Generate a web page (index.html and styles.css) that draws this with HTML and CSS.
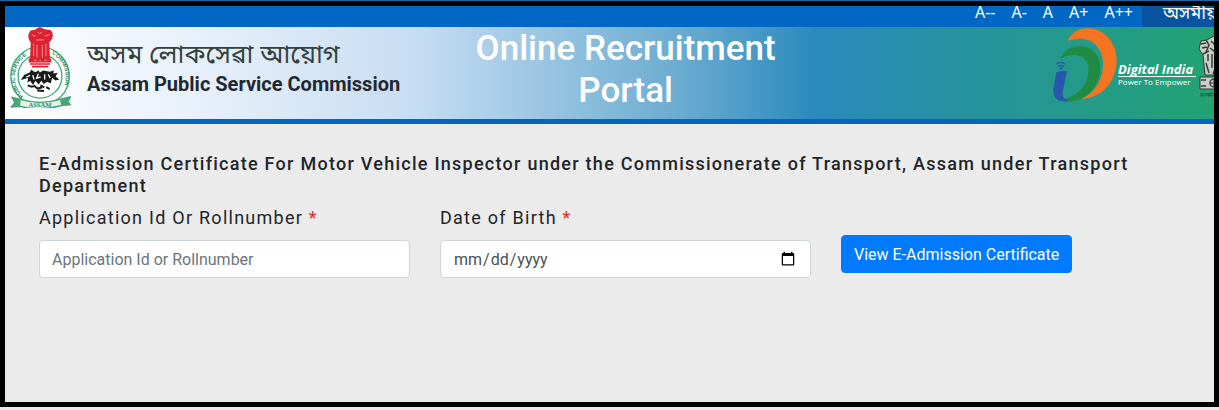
FILE: index.html
```
<!DOCTYPE html>
<html lang="en">
<head>
<meta charset="utf-8">
<meta name="viewport" content="width=device-width, initial-scale=1">
<title>Online Recruitment Portal</title>
<link rel="stylesheet" href="styles.css">
</head>
<body>
<div class="frame">
    <nav class="topbar">
        <div class="text-size">
            <a href="#">A--</a>
            <a href="#">A-</a>
            <a href="#">A</a>
            <a href="#">A+</a>
            <a href="#">A++</a>
        </div>
        <a class="language" href="#" lang="as">অসমীয়া</a>
    </nav>

    <header class="header">
        <div class="brand">
            <svg class="seal" viewBox="27 20 186 244" aria-hidden="true">
                <defs>
                    <path id="sealLeft" d="M70 228 A77 77 0 0 1 88 101"/>
                    <path id="sealRight" d="M155 101 A77 77 0 0 1 160 236"/>
                </defs>
                <circle cx="120" cy="168" r="88" fill="#fff" stroke="#3fae77" stroke-width="4"/>
                <circle cx="120" cy="168" r="66" fill="#fff" stroke="#3fae77" stroke-width="4"/>
                <text class="seal-text"><textPath href="#sealLeft">PUBLIC SERVICE</textPath></text>
                <text class="seal-text"><textPath href="#sealRight">COMMISSION</textPath></text>
                <path d="M36 232 L62 238 Q120 256 180 238 L212 230 L204 245 L211 254 L184 257 Q120 274 60 259 L34 261 L44 247Z" fill="#dff3e8" stroke="#3a9f6c" stroke-width="4"/>
                <path d="M36 232 L62 238 L60 259 L34 261 L44 247Z M180 238 L212 230 L204 245 L211 254 L184 257Z" fill="#4fa47a"/>
                <text class="seal-name" x="120" y="260" text-anchor="middle">ASSAM</text>
                <g fill="#dc2230">
                    <path d="M110 25 Q120 16 130 25 L142 28 Q157 27 158 41 Q160 53 153 61 L148 66 L150 117 L90 117 L92 67 L88 60 Q82 49 87 38 Q91 27 101 30Z"/>
                    <rect x="86" y="115" width="68" height="12"/>
                    <path d="M90 129 H150 V134 H90Z M96 137 H145 V142 H96Z"/>
                </g>
                <path d="M101 70 V108 M111 74 V112 M127 74 V112 M138 70 V108 M95 44 L107 48 M134 47 L149 43 M113 35 L119 40 L126 35 M108 59 H132" fill="none" stroke="#ffc4c8" stroke-width="2"/>
                <path d="M120 118 V124 M100 120 H110 M132 120 H142" stroke="#ffc4c8" stroke-width="2"/>
                <path d="M62 180 L73 164 L89 157 L94 149 L105 156 L116 151 L119 157 L130 151 L149 155 L162 151 L160 160 L173 158 L167 169 L178 178 L166 181 L157 173 L152 190 L142 185 L131 192 L124 182 L116 193 L106 182 L99 195 L90 182 L82 188 L84 174Z" fill="#191c1b"/>
                <path d="M98 165 L102 178 M115 161 L110 174 L122 170 M134 162 V178 M145 163 L151 174 M79 171 L90 166" fill="none" stroke="#fff" stroke-width="4"/>
                <path d="M83 196 L95 200 L104 198 L112 205 L126 202 M112 211 L132 213 M139 201 L149 207 M121 196 L133 202" fill="none" stroke="#191c1b" stroke-width="6"/>
            </svg>
            <div class="brand-text">
                <div class="brand-as" lang="as">অসম লোকসেৱা আয়োগ</div>
                <div class="brand-en">Assam Public Service Commission</div>
            </div>
        </div>

        <h1 class="title">Online Recruitment Portal</h1>

        <div class="partners">
            <svg class="digital-mark" viewBox="36 20 198 225" aria-hidden="true">
                <path d="M83 62 C94 35 120 21 150 24 C199 29 230 73 230 120 C229 184 188 232 124 237 C166 215 191 175 189 126 C187 77 146 39 83 62Z" fill="#f57321"/>
                <path d="M60 116 C70 88 100 76 126 78 C161 82 182 109 181 145 C177 201 139 244 82 243 C71 243 61 241 55 236 C108 237 143 196 145 151 C147 106 106 91 60 116Z" fill="#208c43"/>
                <path d="M49 156 Q62 150 81 153 L68 214 C65 230 74 240 90 242 C58 249 37 235 40 207Z" fill="#2858ae"/>
                <path d="M49 132 Q63 120 77 132 M54 139 Q63 131 72 139" fill="none" stroke="#2858ae" stroke-width="4"/>
                <circle cx="63" cy="144" r="4" fill="#2858ae"/>
            </svg>
            <div class="digital-text">
                <div class="digital-name">Digital India</div>
                <div class="digital-tag">Power To Empower</div>
            </div>
            <svg class="emblem" viewBox="0 0 32 62" aria-hidden="true">
                <path d="M9 4 L16 0 L23 4 L29 5 L31 13 L27 19 L25 39 H7 L5 19 L1 13 L3 5Z M2 41 H30 V53 H2Z" fill="#c9cdca" stroke="#333b37" stroke-width="1"/>
                <path d="M3 8 L8 7 M4 12 L9 11 M8 4 L11 9 L8 16 M13 5 L16 8 L20 4 M12 12 L16 15 L20 12 M23 7 L28 9 M5 18 L11 15 M10 18 V25 M14 18 V32 M19 17 V31 M23 18 V26 M8 27 L11 37 M17 33 L15 38 M22 30 L21 38 M3 44 H8 M3 50 H8 M24 44 H29 M24 50 H29" fill="none" stroke="#343b38" stroke-width="1.5"/>
                <circle cx="16" cy="47" r="4" fill="none" stroke="#343b38" stroke-width="1.5"/>
                <path d="M16 43 V51 M12 47 H20" stroke="#343b38"/>
                <text class="emblem-text" x="16" y="61" text-anchor="middle">सत्यमेव जयते</text>
            </svg>
        </div>
    </header>

    <main class="content">
        <h2 class="heading">E-Admission Certificate For Motor Vehicle Inspector under the Commissionerate of Transport, Assam under Transport Department</h2>
        <form class="search-form">
            <div class="field">
                <label for="applicationId">Application Id Or Rollnumber <span class="required">*</span></label>
                <input type="text" id="applicationId" name="applicationId" placeholder="Application Id or Rollnumber" required>
            </div>
            <div class="field">
                <label for="dob">Date of Birth <span class="required">*</span></label>
                <input type="date" id="dob" name="dob" required>
            </div>
            <div class="action">
                <button type="submit">View E-Admission Certificate</button>
            </div>
        </form>
    </main>
</div>
</body>
</html>
```
FILE: styles.css
```
* {
    box-sizing: border-box;
}

body {
    margin: 0;
    border-top: 1px solid #1a67a3;
    background-color: #ebebeb;
    color: #212529;
    font-family: Roboto, "Liberation Sans", sans-serif;
    font-size: 16px;
}

.frame {
    min-height: calc(100vh - 4px);
    border: 5px solid #000;
    overflow: hidden;
}

/* top bar */
.topbar {
    display: flex;
    justify-content: flex-end;
    height: 21px;
    background-color: #0067c5;
    overflow: hidden;
}

.topbar a {
    color: #fff;
    text-decoration: none;
}

.text-size {
    display: flex;
    gap: 16px;
    padding-right: 9px;
    font-family: "Noto Sans", sans-serif;
    line-height: 12px;
}

.language {
    width: 72px;
    padding-left: 21px;
    background-color: #0854a0;
    font-family: "Noto Sans Bengali", "Noto Sans", sans-serif;
    font-size: 18px;
    line-height: 16px;
    white-space: nowrap;
}

/* header */
.header {
    display: grid;
    grid-template-columns: 35% 1fr 32%;
    height: 97px;
    border-bottom: 5px solid #0866b9;
    background: linear-gradient(to right, #fff 0%, #e6effa 17%, #c6ddf3 34%, #6aabd0 56%, #2b8abd 67%, #25949b 81%, #22a372 100%);
}

.brand {
    display: flex;
    align-items: flex-start;
    gap: 16px;
    padding-left: 4px;
}

.seal {
    flex: none;
    width: 62px;
    height: 81px;
}

.seal-text {
    fill: #2f8a5f;
    font-family: "Liberation Sans", sans-serif;
    font-size: 17px;
    font-weight: bold;
}

.seal-name {
    fill: #2f8a5c;
    font-family: "Liberation Serif", serif;
    font-size: 20px;
    font-weight: bold;
}

.brand-text {
    padding-top: 14px;
    white-space: nowrap;
}

.brand-as {
    color: #33413c;
    font-family: "Noto Sans Bengali", "Noto Sans", sans-serif;
    font-size: 26px;
    line-height: 32px;
}

.brand-en {
    color: #22282f;
    font-size: 20px;
    font-weight: bold;
    line-height: 22px;
}

.title {
    margin: 0;
    padding: 1px 20px 0 16px;
    color: #fff;
    font-size: 35px;
    font-weight: 500;
    line-height: 42px;
    text-align: center;
}

.partners {
    display: flex;
    justify-content: flex-end;
    align-items: flex-start;
    margin-right: -16px;
}

.digital-mark {
    flex: none;
    width: 66px;
    height: 75px;
}

.digital-text {
    width: 78px;
    margin-right: 2px;
    padding-top: 36px;
    color: #fff;
    font-family: "Open Sans", sans-serif;
    white-space: nowrap;
}

.digital-name {
    border-bottom: 1px solid #fff;
    font-size: 13px;
    font-style: italic;
    font-weight: bold;
    line-height: 13px;
}

.digital-tag {
    font-size: 8px;
    line-height: 10px;
}

.emblem {
    flex: none;
    width: 32px;
    height: 62px;
    margin-top: 9px;
}

.emblem-text {
    fill: #343b38;
    font-size: 6px;
}

/* form */
.content {
    padding: 29px 2px 0 34px;
}

.heading {
    margin: 0 0 8px;
    font-size: 18px;
    font-weight: 500;
    line-height: 22px;
    letter-spacing: 0.07em;
}

.search-form {
    display: grid;
    grid-template-columns: repeat(3, 1fr);
    gap: 30px;
}

.field label {
    display: block;
    margin-bottom: 10px;
    font-size: 18px;
    line-height: 25px;
    letter-spacing: 0.07em;
}

.required {
    color: #e5261f;
}

.field input {
    display: block;
    width: 100%;
    height: 38px;
    padding: 6px 12px;
    border: 1px solid #ced4da;
    border-radius: 4px;
    background-color: #fff;
    color: #495057;
    font-family: inherit;
    font-size: 16px;
}

.field input::placeholder {
    color: #6c757d;
}

.action {
    padding-top: 30px;
}

button {
    height: 38px;
    padding: 6px 12px;
    border: 1px solid #007bff;
    border-radius: 4px;
    background-color: #007bff;
    color: #fff;
    font-family: inherit;
    font-size: 16px;
    cursor: pointer;
}

button:hover {
    background-color: #0069d9;
}
```
